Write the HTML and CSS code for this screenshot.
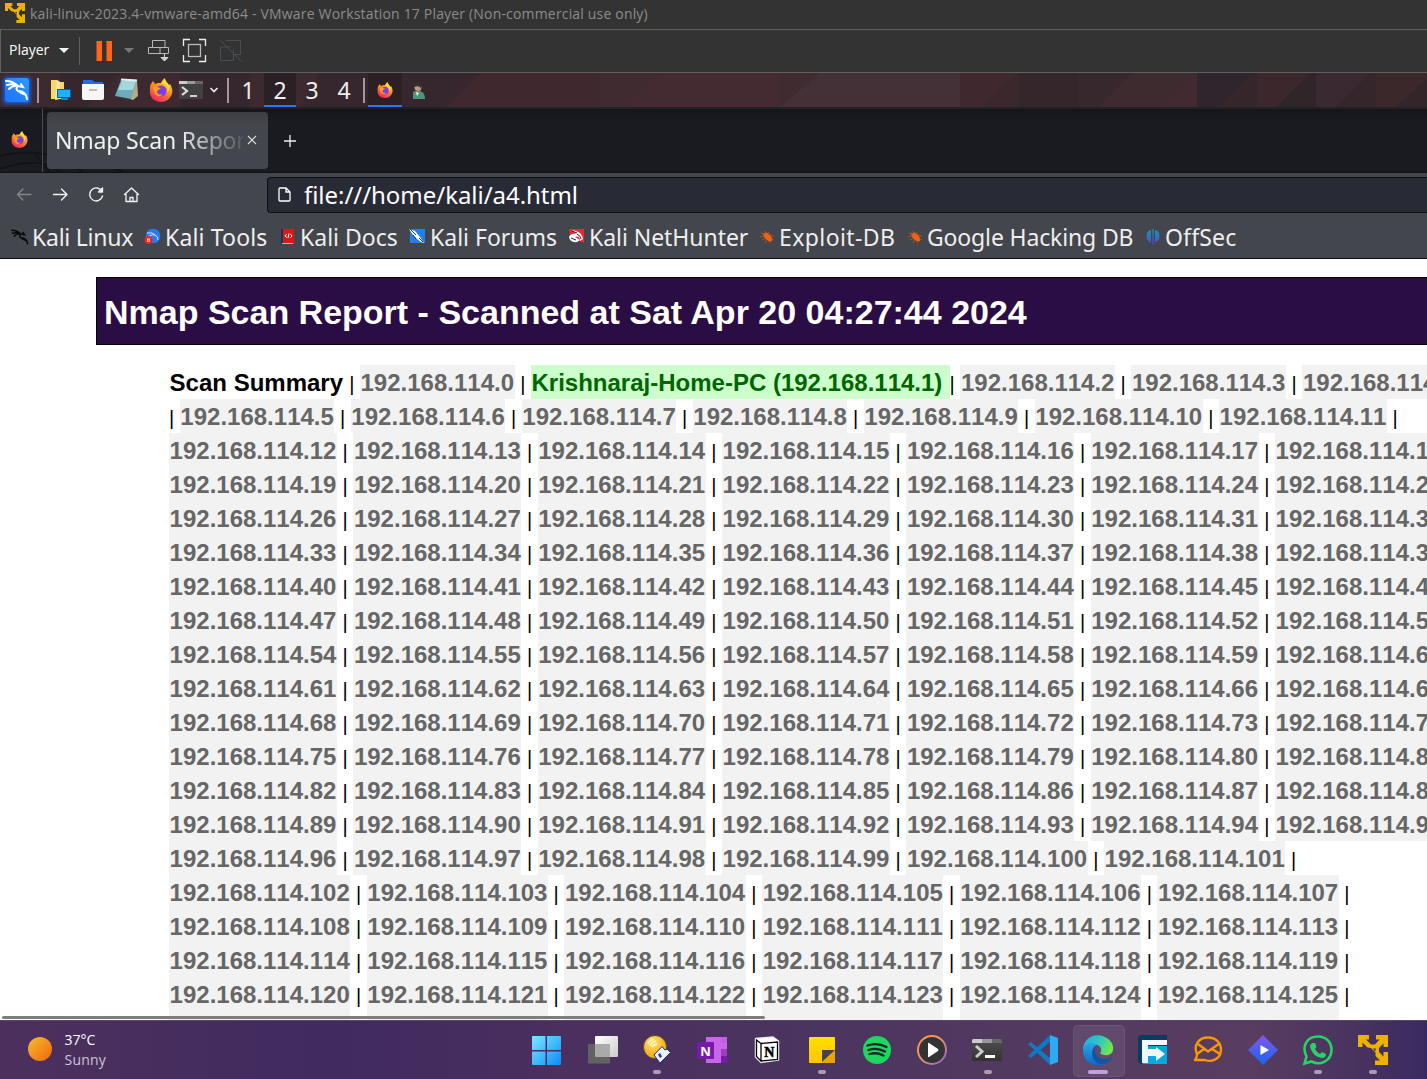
FILE: index.html
```html
<!DOCTYPE html>
<html lang="en">
<head>
<meta charset="utf-8">
<title>Nmap Scan Report</title>
<link rel="stylesheet" href="styles.css">
</head>
<body>
<svg class="defs" aria-hidden="true">
  <defs>
    <linearGradient id="fxg" x1="0.8" y1="0" x2="0.3" y2="1"><stop offset="0" stop-color="#ffe83a"/><stop offset=".45" stop-color="#ff9320"/><stop offset="1" stop-color="#f5215f"/></linearGradient>
    <linearGradient id="term" x1="0" y1="0" x2="0" y2="1"><stop offset="0" stop-color="#505050"/><stop offset="1" stop-color="#333"/></linearGradient>
    <symbol id="vmware" viewBox="0 0 30 30">
      <path d="M0 0H11V4.500H8L13 9.500H17L21.500 4.500H18V0H30V12H25.500V8.500L21 13V17L25.500 21.500V17H30V30H17V25.500H22L17.500 21V17.500L13 13L9.500 12.500L4.500 7.500V12H0Z" fill="#edb200"/>
      <path d="M15 13.500H18L17 16.500Z" fill="#433440"/>
    </symbol>
    <symbol id="firefox" viewBox="0 0 24 24">
      <path d="M2 6L4 3L6 6L9 5L12 5C13 3 14 1 16 0C16 3 19 5 20 7L21 6C23 9 24 13 23 16C21 21 17 24 12 24C5 24 0 19 1 12C1 9 1 7 2 6Z" fill="url(#fxg)"/>
      <circle cx="12" cy="13" r="5.500" fill="#7a3fe0"/>
      <path d="M4 9C8 8 10 10 12 10C10 12 8 12 8 14C9 17 12 17 14 16C11 20 6 18 5 14Z" fill="#ff9b22"/>
      <path d="M12 5C17 6 20 10 18 15C21 12 21 8 19 6L16 2Z" fill="#ffdf3b"/>
    </symbol>
    <symbol id="terminal" viewBox="0 0 30 22">
      <rect width="30" height="22" rx="1.500" fill="url(#term)"/>
      <path d="M0 4V1.500Q0 0 1.500 0H10V4Z" fill="#ccc"/><path d="M10 0H20V4H10Z" fill="#999"/><path d="M20 0H28.500Q30 0 30 1.500V4H20Z" fill="#666"/>
      <path d="M4 7L10 12.500L4 18" fill="none" stroke="#ccc" stroke-width="3"/><rect x="13" y="16" width="10" height="3" fill="#fff"/>
    </symbol>
    <symbol id="dragon" viewBox="0 0 24 24">
      <path d="M1 3Q8 3 13 8M2 7Q8 5 13 8M4 11Q8 7 13 8M13 8Q10 11 13 13Q21 13 22 21M13 8L18 9L16 6M13 13Q17 16 21 17" fill="none" stroke="currentColor" stroke-width="2" stroke-linecap="round"/>
    </symbol>
    <symbol id="bug" viewBox="0 0 14 14">
      <path d="M3 3.500L7 2.500L10 5L12 8L12 11L9.500 11.500L6 9.500L4 7Z" fill="#f26310"/>
      <path d="M1 3L5 4M5 1L6 4M9 2L8 5M0 6.500L5 6M2 10L6 8M5 13L7 9M10 4L12 6L14 6M11 9L14 10M9 11L10 13.500" fill="none" stroke="#c4561c" stroke-width=".8"/>
    </symbol>
  </defs>
</svg>

<div class="screen">
  <header class="titlebar">
    <svg width="20" height="20"><use href="#vmware"/></svg>
    <span class="title-text">kali-linux-2023.4-vmware-amd64 - VMware Workstation 17 Player (Non-commercial use only)</span>
  </header>

  <div class="vmbar">
    <span class="player">Player</span>
    <svg width="210" height="42" viewBox="49 30 210 42" fill="none">
      <path d="M59 48H69L64 53Z" fill="#fff"/>
      <path d="M79.500 37V65" stroke="#606060"/>
      <path d="M96.500 41H102V61H96.500ZM106.500 41H112V61H106.500Z" fill="#ff661a"/>
      <path d="M124 48H134L129 53Z" fill="#777"/>
      <path d="M152.500 40.500H165V47.500H152.500ZM148.500 47.500H168.500V53.500H148.500ZM160 47.500V53.500" stroke="#b8b8b8"/>
      <path d="M164.500 54V61M161 57.500L164.500 61L168 57.500Z" stroke="#d4d4d4" fill="#d4d4d4"/>
      <path d="M183.500 46V39.500H190M199 39.500H205.500V46M205.500 55V61.500H199M190 61.500H183.500V55" stroke="#eee" stroke-width="1.300"/>
      <rect x="188.500" y="44.500" width="12" height="12" stroke="#bbb" stroke-width="1.300"/>
      <path d="M226 40.500H240.500V54.500H235M231 47H220.500V60.500H233.500V50M219.500 39.500L241.500 61.500" stroke="#43505b"/>
    </svg>
  </div>

  <div class="panel">
    <svg class="panel-bg" width="1427" height="34" viewBox="0 0 1427 34" preserveAspectRatio="none">
      <rect width="1427" height="34" fill="#3d2a30"/>
      <path d="M60 0H120L86 34H60ZM180 0H250V34H180ZM320 0H420V34H300ZM420 0H480L446 34H420Z" fill="#35272d"/>
      <path d="M480 0H600V34H446ZM600 0H780V34H600Z" fill="#3f292f"/>
      <path d="M660 0H780V34H626Z" fill="#432c30"/>
      <path d="M780 0H960V34H780Z" fill="#443137"/><path d="M600 0H660L626 34H600ZM820 0H780V34Z" fill="#402b31"/>
      <path d="M660 0H780V34H626Z" fill="#432b31"/>
      <path d="M660 0H625V34Z" fill="#402b31"/>
      <path d="M960 0H1019V34H960Z" fill="#40292e"/><path d="M1019 0V34H980Z" fill="#3a282d"/>
      <path d="M1019 0H1078V34H1019Z" fill="#34262b"/><path d="M1078 0H1133L1099 34H1078Z" fill="#37282d"/>
      <path d="M1133 0H1197V34H1099Z" fill="#3d2b2f"/><path d="M1197 0V34H1160Z" fill="#422a31"/>
      <path d="M1197 0H1257V34H1197Z" fill="#2f252d"/><path d="M1252 0H1257V34H1218Z" fill="#35262c"/>
      <path d="M1257 0H1310L1276 34H1257Z" fill="#3b272c"/><path d="M1310 0H1316V34H1276Z" fill="#302529"/>
      <path d="M1316 0H1370L1336 34H1316Z" fill="#3a2930"/><path d="M1370 0H1376V34H1336Z" fill="#34262b"/>
      <path d="M1376 0H1427V34H1376Z" fill="#3a282b"/><path d="M1427 5V34H1396Z" fill="#34252b"/>
    </svg>
    <svg class="panel-icons" width="236" height="34" viewBox="0 73 236 34" fill="none">
      <defs><linearGradient id="kg" x1="0" y1="1" x2="1" y2="0"><stop stop-color="#2170ff"/><stop offset="1" stop-color="#279cff"/></linearGradient>
      <filter id="glow" x="-30%" y="-30%" width="160%" height="160%"><feGaussianBlur stdDeviation="1.500"/></filter></defs>
      <rect x="3" y="77" width="28" height="27" rx="4" fill="#1557d0" filter="url(#glow)"/>
      <rect x="5" y="78" width="24" height="24" rx="3" fill="url(#kg)"/>
      <svg x="5" y="78" width="24" height="24" color="#fff"><use href="#dragon"/></svg>
      <rect x="37" y="78" width="2" height="25" fill="#a1999c"/>
      <path d="M51 80H57L60 82H64V99H51Z" fill="#f8d66c"/><path d="M57 80L60 82V99L55 100Z" fill="#ffe6a0"/>
      <rect x="57.500" y="89.500" width="13" height="8" fill="#1db2ff" stroke="#075caa"/><path d="M61 99H68" stroke="#0c85d8" stroke-width="2"/>
      <path d="M83 80H92L95 82H103V90H83Z" fill="#2d68e4"/><path d="M82 84H104V98Q104 100 102 100H84Q82 100 82 98Z" fill="#f6f6f6"/><path d="M89 90H97" stroke="#aaa" stroke-width="1.500"/>
      <path d="M121 79L137 80L138 96L133 100L130 99Z" fill="#b5ab87"/><path d="M121 80L137 80L131 99L115 96Z" fill="#6cabb9"/><path d="M122 81L136 81L133 90L118 90Z" fill="#a4d6de"/><path d="M121 79.500L137 80.500" stroke="#e8f0ef" stroke-width="2"/>
      <svg x="149" y="78" width="24" height="24"><use href="#firefox"/></svg>
      <rect x="179" y="81" width="24" height="18" rx="1" fill="#414141"/><path d="M179 81H187V84H179Z" fill="#ccc"/><path d="M187 81H195V84H187Z" fill="#999"/><path d="M195 81H203V84H195Z" fill="#666"/>
      <path d="M182 87L187 91L182 95" stroke="#ddd" stroke-width="2.200"/><path d="M190 96H197" stroke="#fff" stroke-width="1.500"/>
      <path d="M210.500 88L214 91.500L217.500 88" stroke="#eee" stroke-width="1.600"/>
      <rect x="227" y="78" width="2" height="25" fill="#a1999c"/>
    </svg>
    <nav class="workspaces"><span>1</span><span class="active">2</span><span>3</span><span>4</span></nav>
    <i class="divider"></i>
    <div class="win active"><svg width="16" height="16"><use href="#firefox"/></svg></div>
    <div class="win"><svg width="14" height="17" viewBox="0 0 14 17"><path d="M1 10Q4 8 8 9Q13 10 13 17H1Z" fill="#539478"/><circle cx="6" cy="5.500" r="3.500" fill="#c39a7c"/><path d="M2 5Q2 0 6 0Q11 1 9 7Q8 3 2 5Z" fill="#303033"/><path d="M4 10L7 11L5 14Z" fill="#fff"/></svg></div>
  </div>

  <div class="tabs">
    <svg class="tab-art" width="150" height="64" viewBox="0 0 150 64" fill="none"><path d="M0 47Q50 35 84 64M0 60Q40 45 62 64M35 45L50 64M110 58L126 64" stroke="#121317" stroke-width="2"/></svg>
    <div class="pinned"><svg width="17" height="17"><use href="#firefox"/></svg></div>
    <div class="tab">
      <span class="tab-title">Nmap Scan Report</span>
      <svg width="10" height="10" viewBox="0 0 10 10"><path d="M1 1L9 9M9 1L1 9" stroke="#ddd" stroke-width="1.100"/></svg>
    </div>
    <svg class="plus" width="12" height="12" viewBox="0 0 12 12"><path d="M6 0V12M0 6H12" stroke="#eee" stroke-width="1.300"/></svg>
  </div>

  <div class="nav">
    <svg width="267" height="42" viewBox="0 173 267 42" fill="none" stroke="#f2f2f2" stroke-width="1.350" stroke-linecap="round" stroke-linejoin="round">
      <path d="M31 194.500H17.500M23 189L17.500 194.500L23 200" stroke="#85868b"/>
      <path d="M53.500 194.500H67M61.500 189L67 194.500L61.500 200"/>
      <path d="M102 191.500A6.500 6.500 0 1 0 102.500 196M102.500 188V192H98.500Z"/>
      <path d="M124.500 194.500L131.500 188L138.500 194.500M126 194V201.500H137V194M130 201V197.500H133V201"/>
    </svg>
    <div class="url">
      <svg width="13" height="15" viewBox="0 0 13 15" fill="none"><path d="M1 2Q1 1 2 1H8L12 5V13Q12 14 11 14H2Q1 14 1 13ZM8 1V5H12" stroke="#fff" stroke-width="1.300"/></svg>
      <span>file:///home/kali/a4.html</span>
    </div>
  </div>

  <div class="bookmarks">
    <div class="bm b1"><svg width="18" height="18" color="#08090b"><use href="#dragon"/></svg><span>Kali Linux</span></div>
    <div class="bm b2"><svg width="17" height="17" viewBox="0 0 17 17"><circle cx="9" cy="8" r="7.300" fill="#277cf2"/><path d="M3 5Q9 4 11 7Q14 8 14 12M5 8Q9 6 11 7" fill="none" stroke="#cfe4ff"/><circle cx="4.500" cy="12" r="4" fill="#e72828"/><path d="M3 11H6M3.800 11V14M5.300 11V14" stroke="#fff" stroke-width=".8"/></svg><span>Kali Tools</span></div>
    <div class="bm b3"><svg width="15" height="17" viewBox="0 0 15 17"><path d="M1 1H3V16H1Z" fill="#17365f"/><path d="M3 1H14V15H3Z" fill="#dc1717"/><path d="M2 15.500H13" stroke="#bbb"/><path d="M6.500 6L5 8L7 9.500M9 5.500L8 10M10.500 6L12 8L10.500 9.500" fill="none" stroke="#fff"/></svg><span>Kali Docs</span></div>
    <div class="bm b4"><svg width="17" height="17" viewBox="0 0 17 17"><rect x="1" y="1" width="15" height="14" fill="#237fef"/><path d="M0 1L6 3L11 9L15 15L12 14L8 11L4 7Z" fill="#fff"/><path d="M1 1L7 7M10 10L14 14M4 7L7 11" stroke="#333"/></svg><span>Kali Forums</span></div>
    <div class="bm b5"><svg width="17" height="17" viewBox="0 0 17 17"><path d="M1 1H16V15L9 12L2 8Z" fill="#ef2731"/><path d="M4 2L8 3Q14 5 15 11L12 13Q12 7 7 9L12 12L9 14Q2 15 1 9Q3 5 8 6Z" fill="#fff"/><path d="M4 3L9 5M3 10L8 12M9 6Q13 8 13 11" fill="none" stroke="#222"/></svg><span>Kali NetHunter</span></div>
    <div class="bm b6"><svg width="14" height="14"><use href="#bug"/></svg><span>Exploit-DB</span></div>
    <div class="bm b7"><svg width="14" height="14"><use href="#bug"/></svg><span>Google Hacking DB</span></div>
    <div class="bm b8"><svg width="14" height="16" viewBox="0 0 14 16"><defs><linearGradient id="off" x1="0" y1="0" x2="0" y2="1"><stop stop-color="#12a0b5"/><stop offset="1" stop-color="#593cce"/></linearGradient></defs><path d="M5 1V14Q0.500 12 0.500 7.500Q0.500 2 5 1ZM6.400 0H7.600V16H6.400ZM9 1Q13.500 2 13.500 7.500Q13.500 12 9 14Z" fill="url(#off)"/></svg><span>OffSec</span></div>
  </div>

  <main class="page">
    <h1>Nmap Scan Report - Scanned at Sat Apr 20 04:27:44 2024</h1>
    <div class="hosts" id="hosts"></div>
    <div class="hscroll"></div>
  </main>

  <footer class="taskbar">
    <div class="weather">
      <i class="sun"></i>
      <div><div class="temp">37°C</div><div class="cond">Sunny</div></div>
    </div>
    <div class="apps">
      <div class="app"><svg viewBox="0 0 32 32"><defs><linearGradient id="wg" x1="0" y1="0" x2="1" y2="1" ><stop stop-color="#7be9ff"/><stop offset="1" stop-color="#0b8cfb"/></linearGradient></defs><path d="M3 2H15.500V16H2V3Q2 2 3 2ZM17 2H30Q31 2 31 3V16H17ZM2 17.500H15.500V31H3Q2 31 2 30ZM17 17.500H31V30Q31 31 30 31H17Z" fill="url(#wg)"/></svg></div>
      <div class="app"><svg viewBox="0 0 32 32"><defs><linearGradient id="tv" x1="0" y1="0" x2="1" y2="1"><stop stop-color="#fff"/><stop offset="1" stop-color="#ccc"/></linearGradient></defs><rect x="9" y="2" width="23" height="21" rx="1" fill="url(#tv)"/><rect x="2" y="10" width="22" height="19.500" rx="1" fill="#626262"/><path d="M9 10H24V23H10Q9 23 9 22Z" fill="#aaa"/></svg></div>
      <div class="app run"><svg viewBox="0 0 32 32"><defs><radialGradient id="bulb" cx=".4" cy=".3"><stop stop-color="#ffe77b"/><stop offset="1" stop-color="#f5b51e"/></radialGradient></defs><circle cx="14" cy="13" r="11.500" fill="url(#bulb)" stroke="#453040" stroke-width=".7"/><path d="M7 10Q8 6 13 5M9 12Q10 8 15 7M11 13Q12 11 16 10" fill="none" stroke="#fff5c3" stroke-width="1.300"/><path d="M13 21L21 12.500L24 16L26 15L29.500 18.500L19 29Z" fill="#edf0fa" stroke="#1b3476" stroke-width="1"/><path d="M17 20.500L19 19L21 22.500L19 24Z" fill="#2430b4"/></svg></div>
      <div class="app"><svg viewBox="0 0 32 32"><path d="M10 3H31V29H10Z" fill="#c865e8"/><path d="M25 3H31V9H25Z" fill="#bd60e1"/><path d="M25 15H31V22H25Z" fill="#a03cbf"/><path d="M25 22H31V29H25Z" fill="#7719aa"/><rect x="1" y="8" width="17" height="17" rx="1" fill="#7719aa"/><text x="9.500" y="21.500" text-anchor="middle" class="n-one">N</text></svg></div>
      <div class="app"><svg viewBox="0 0 32 32"><path d="M4.500 4.500L22 3L27.500 7V26L10 28.500L4.500 23Z" fill="#fff" stroke="#eee" stroke-width="1.500" stroke-linejoin="round"/><path d="M5.500 6L10 9.500V27L5.500 22.500ZM10 9.500L26.500 8V25.500L10 27Z" fill="#fff" stroke="#050505" stroke-width="1.300"/><text x="18.300" y="23" text-anchor="middle" class="n-notion">N</text></svg></div>
      <div class="app run"><svg viewBox="0 0 32 32"><defs><linearGradient id="sn" x1="0" y1="0" x2="0" y2="1"><stop stop-color="#ffe000"/><stop offset="1" stop-color="#ffc500"/></linearGradient></defs><path d="M4 3H28Q29 3 29 4V28Q29 29 28 29H4Q3 29 3 28V4Q3 3 4 3Z" fill="url(#sn)"/><path d="M16 29L29 16V28Q29 29 28 29Z" fill="#eaa500"/><path d="M16 28V16H29Z" fill="#454545"/></svg></div>
      <div class="app"><svg viewBox="0 0 32 32"><circle cx="16" cy="16" r="14" fill="#1ed760"/><path d="M6.500 11.500Q16 8 25.500 13M7.500 16Q16 13 24 17.500M8.500 20Q16 18 22.500 21.500" fill="none" stroke="#1b2822" stroke-width="2.300" stroke-linecap="round"/></svg></div>
      <div class="app"><svg viewBox="0 0 32 32"><defs><linearGradient id="mp" x1="0" y1="0" x2="1" y2="1"><stop stop-color="#ff9b31"/><stop offset=".5" stop-color="#e69079"/><stop offset="1" stop-color="#8e59d8"/></linearGradient></defs><circle cx="16" cy="16" r="14" fill="#333" stroke="url(#mp)" stroke-width="2"/><path d="M12 9.500Q12 8.500 13 9L22 15Q23 16 22 17L13 23Q12 23.500 12 22.500Z" fill="#fff"/></svg></div>
      <div class="app run"><svg viewBox="0 0 32 32"><use href="#terminal" x="1" y="5" width="30" height="22"/></svg></div>
      <div class="app"><svg viewBox="0 0 32 32"><path d="M1 10L4 8L23 24L23 31Z" fill="#1479be"/><path d="M1 22L4 24L23 8V1Z" fill="#087bc4"/><path d="M23 1L31 4V28L23 31V24V8Z" fill="#30a9f3"/></svg></div>
      <div class="app current"><svg viewBox="0 0 32 32"><defs><linearGradient id="eg" x1="0" y1=".1" x2="1" y2=".4"><stop stop-color="#22afe0"/><stop offset=".55" stop-color="#31c6c3"/><stop offset="1" stop-color="#70e74c"/></linearGradient><linearGradient id="eb" x1="0" y1="0" x2="0" y2="1"><stop stop-color="#28a8e5"/><stop offset="1" stop-color="#0b67ca"/></linearGradient></defs><path d="M1 16C1 4 13-2 23 3C29 6 32 11 31 16C30 22 22 22 19 20C17 19 20 18 19 15C18 10 9 8 1 16Z" fill="url(#eg)"/><path d="M1 16C2 8 10 7 15 11C11 12 8 19 13 24C18 29 25 26 29 24C25 31 16 33 10 30C4 28 1 22 1 16Z" fill="url(#eb)"/><path d="M15 11C11 15 13 21 18 24C22 26 26 25 29 23C30 23 30 24 29 25C24 31 17 32 13 27C8 22 10 14 15 11Z" fill="#1354a3"/></svg></div>
      <div class="app"><svg viewBox="0 0 32 32"><path d="M4 1H30V30H4Q1 29 1 26V4Q1 1 4 1Z" fill="#073e60"/><path d="M6 12H30V30H6Z" fill="#04a9df"/><path d="M5 6H30V11H11V15H19V13L28 20L19 27V22H11V29H5Z" fill="#f1f8fd"/></svg></div>
      <div class="app"><svg viewBox="0 0 32 32" fill="none" stroke="#ff9800" stroke-width="2.300" stroke-linejoin="round"><path d="M5 20C1 11 7 3.500 16 3.500C24 3.500 29 9 29 15.500C29 24 21 29 13 26H3Q5 24 5 20"/><path d="M6 10L16 17.500L27.500 9.500M5 20L12 15M20 15L28 20"/></svg></div>
      <div class="app"><svg viewBox="0 0 32 32"><defs><linearGradient id="pa" x1="0" y1="0" x2="0" y2="1"><stop stop-color="#8156ed"/><stop offset="1" stop-color="#1765ea"/></linearGradient></defs><path d="M16 1L31 16L16 31L1 16Z" fill="url(#pa)"/><path d="M13.500 11L22 16L13.500 21Z" fill="#fff"/></svg></div>
      <div class="app run"><svg viewBox="0 0 32 32"><path d="M2.500 29.500L4.500 22.500C-1 11 6 2.500 16 2.500C25 2.500 29.500 9 29.500 16C29.500 27 18 32 9.500 27.500Z" fill="none" stroke="#27d366" stroke-width="2.600"/><path d="M10 9L13 9L14.500 13L13 15Q15 19 18 20L20 18L24 20Q24 24 20 24Q11 23 8 13Q8 10 10 9Z" fill="#27d366"/></svg></div>
      <div class="app run"><svg viewBox="0 0 32 32"><use href="#vmware" x="1" y="1" width="30" height="30"/></svg></div>
    </div>
  </footer>
</div>
<script src="hosts.js"></script>
</body>
</html>
```
FILE: styles.css
```css
* { box-sizing: border-box; }
body { margin: 0; overflow: hidden; background: #fff; }
svg { display: block; flex: none; }
.defs { position: absolute; width: 0; height: 0; }
.screen { width: 1427px; height: 1079px; display: flex; flex-direction: column; overflow: hidden; font-family: "Noto Sans", sans-serif; white-space: nowrap; }
.screen > * { flex: none; }

.titlebar { height: 29px; background: #333; display: flex; align-items: center; padding: 0 0 3px 5px; gap: 5px; color: #8c8c8c; font: 14px/20px "Open Sans", sans-serif; }
.title-text { letter-spacing: .175px; padding-top: 2px; }
.vmbar { height: 44px; background: #333; border: 1px solid #606060; border-right: 0; display: flex; }
.player { width: 48px; padding-left: 8px; color: #fff; font: 14px/40px "Open Sans", sans-serif; }

.panel { height: 34px; position: relative; display: flex; background: #3d2a30; }
.panel-bg { position: absolute; left: 0; top: 0; }
.panel > :not(.panel-bg) { position: relative; }
.workspaces { display: flex; width: 129px; margin-left: -4px; }
.workspaces span { width: 32px; text-align: center; color: #eee; font-size: 23px; line-height: 35px; height: 34px; }
.workspaces .active { background: #2b2025; border-bottom: 2px solid #2a78ff; }
.divider { width: 2px; height: 25px; background: #a1999c; margin: 5px 3px 0 2px; }
.win { width: 34px; height: 34px; display: flex; align-items: center; justify-content: center; padding-top: 1px; }
.win.active { background: #2d2024; border-bottom: 2px solid #2a78ff; padding-top: 2px; }

.tabs { height: 66px; border-top: 2px solid #222126; border-bottom: 1px solid #0d0e11; background: linear-gradient(#15161a, #1a1b20 12px); display: flex; position: relative; }
.tab-art { position: absolute; left: 0; top: 0; }
.pinned { position: relative; width: 43px; height: 63px; border-right: 1px solid #4b4c50; display: flex; align-items: center; padding: 0 0 2px 11px; }
.tab { position: relative; width: 221px; height: 57px; margin: 3px 0 0 4px; border-radius: 4px; background: linear-gradient(#3d3e44, #44464d 14px); display: flex; align-items: center; padding: 0 0 1px 8px; }
.tab-title { width: 188px; margin-right: 4px; overflow: hidden; font-size: 23px; line-height: 34px; letter-spacing: -.2px; color: #f0f0f0; -webkit-mask-image: linear-gradient(90deg, #000 125px, transparent 195px); mask-image: linear-gradient(90deg, #000 125px, transparent 195px); }
.plus { margin: 26px 0 0 16px; }

.nav { height: 42px; background: #44464d; display: flex; }
.url { flex: 1; height: 36px; margin-top: 4px; background: #282a36; border: 1px solid #0d0e13; border-right: 0; border-radius: 4px 0 0 4px; display: flex; align-items: center; padding: 0 0 1px 10px; gap: 13px; color: #fff; font-size: 24px; line-height: 34px; letter-spacing: -.04px; }

.bookmarks { height: 44px; background: #44464d; border-bottom: 1px solid #0b0c0f; display: flex; padding-left: 11px; }
.bm { display: flex; align-items: center; gap: 4px; color: #eee; font-size: 23px; line-height: 43px; padding-top: 2px; }
.bm svg { margin-bottom: 2px; }
.b1 { width: 133px; gap: 3px; letter-spacing: -.25px; }
.b2 { width: 136px; letter-spacing: .15px; }
.b3 { width: 129px; gap: 5px; }
.b4 { width: 159px; }
.b5 { width: 192px; letter-spacing: -.05px; }
.b6 { width: 148px; gap: 5px; letter-spacing: .4px; }
.b7 { width: 238px; gap: 5px; letter-spacing: -.15px; }
.b8 { gap: 5px; letter-spacing: .15px; }

.page { height: 761px; position: relative; overflow: hidden; background: #fff; font-family: "Liberation Sans", Arial, sans-serif; padding: 18px 0 0 96px; }
h1 { margin: 0; height: 68px; width: 1400px; border: 1px solid #000; background: #2a0d45; color: #fff; padding-left: 7px; font-size: 34px; line-height: 68px; }
.hosts { margin: 20px 0 0 73px; width: 1400px; font-kerning: none; }
.row { height: 34px; display: flex; align-items: baseline; white-space: pre; font-size: 20px; color: #000; }
.row b { font-size: 24px; line-height: 36px; height: 34px; padding: 0 .6px; }
.row .down { background: #f2f2f2; color: #666; }
.row .up { background: #cfc; color: #060; }
.hscroll { position: absolute; left: 2px; top: 757px; width: 763px; height: 3px; border-radius: 2px; background: #7d7d7d; }

.taskbar { height: 59px; border-top: 1px solid #5a4565; background: linear-gradient(90deg, #4c2f5d 0, #4a2f5e 80px, #402a60 330px, #4a2f5f 560px, #4b345f 820px, #533a60 1050px, #593d60 1250px, #46315f 1370px, #382a60 1427px); display: flex; }
.weather { width: 518.500px; padding: 9px 0 0 28px; display: flex; gap: 12.500px; color: #fff; font: 14px/20px "Open Sans", sans-serif; }
.sun { width: 24px; height: 24px; margin-top: 7px; border-radius: 50%; background: linear-gradient(135deg, #f4bd32, #f0650c); }
.cond { color: #cec4d5; letter-spacing: .2px; }
.apps { display: flex; }
.app { width: 55.130px; height: 58px; padding: 13px 0 0 11.900px; position: relative; }
.app svg { width: 32px; height: 32px; position: relative; }
.run::after, .current::after { content: ""; position: absolute; left: 24px; top: 49px; width: 8px; height: 4px; border-radius: 2px; background: #a99db3; }
.current::after { left: 18px; width: 20px; background: #c0a0df; }
.current::before { content: ""; position: absolute; left: 3px; top: 4px; width: 50px; height: 50px; border-radius: 5px; background: rgba(255,255,255,.08); border: 1px solid rgba(255,255,255,.06); }
.n-one { font: bold 13px "Open Sans", sans-serif; fill: #fff; }
.n-notion { font: bold 14px "Liberation Serif", serif; fill: #000; stroke: #000; stroke-width: .5px; }
```
FILE: hosts.js
```js
// Builds the scan summary: one line of host links per row.
const hosts = document.getElementById("hosts");
const ip = n => `<b class="down">192.168.114.${n}</b>`;
const range = (a, b) => Array.from({ length: b - a + 1 }, (_, i) => ip(a + i));
const sep = "<span> | </span>";
const addRow = html => hosts.insertAdjacentHTML("beforeend", `<div class="row">${html}</div>`);

addRow(["<b>Scan Summary</b>", ip(0)].join(sep) + sep +
  '<b class="up">Krishnaraj-Home-PC (192.168.114.1) </b><span>| </span>' + range(2, 4).join(sep));
addRow("<span>| </span>" + range(5, 11).join(sep) + sep);
for (let n = 12; n < 96; n += 7) addRow(range(n, n + 6).join(sep) + sep);
addRow(range(96, 101).join(sep) + sep);
for (let n = 102; n < 132; n += 6) addRow(range(n, n + 5).join(sep) + sep);
```
